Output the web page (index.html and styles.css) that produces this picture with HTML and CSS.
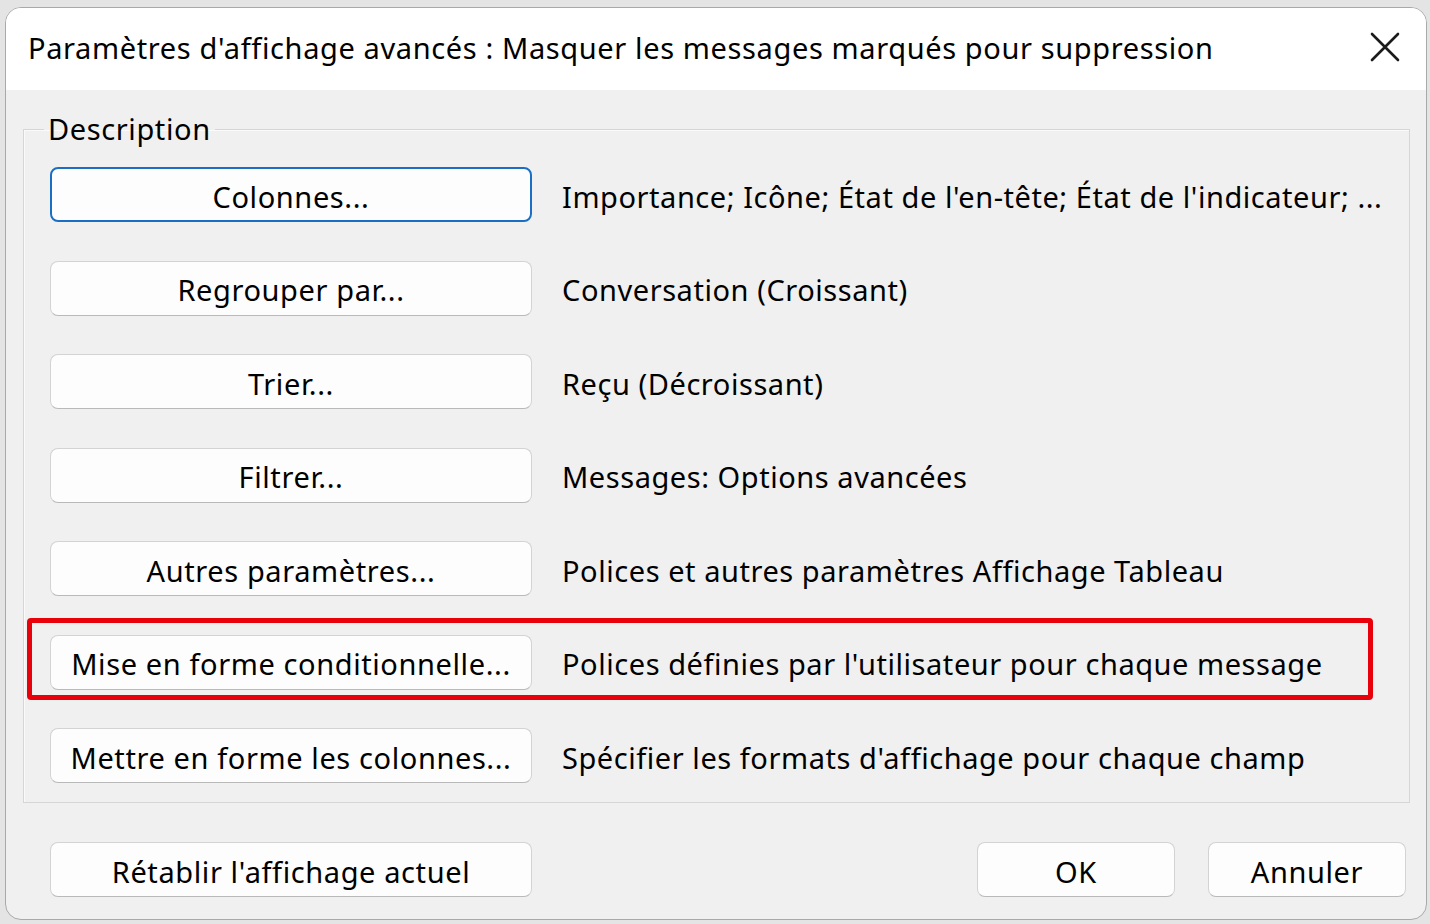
FILE: index.html
```html
<!DOCTYPE html>
<html lang="fr">
<head>
<meta charset="utf-8">
<title>Paramètres d'affichage avancés</title>
<link rel="stylesheet" href="styles.css">
</head>
<body>
<div class="dialog">
  <div class="titlebar">
    <div class="title">Paramètres d'affichage avancés : Masquer les messages marqués pour suppression</div>
    <div class="close" aria-label="Fermer">
      <svg width="30" height="30" viewBox="0 0 30 30"><path d="M2 2 L28 28 M28 2 L2 28" stroke="#1b1b1b" stroke-width="2.6" stroke-linecap="round" fill="none"/></svg>
    </div>
  </div>
  <div class="content">
    <fieldset class="group">
      <legend>Description</legend>
      <div class="row"><button class="btn focused">Colonnes...</button><span class="desc">Importance; Icône; État de l'en-tête; État de l'indicateur; ...</span></div>
      <div class="row"><button class="btn">Regrouper par...</button><span class="desc">Conversation (Croissant)</span></div>
      <div class="row"><button class="btn">Trier...</button><span class="desc">Reçu (Décroissant)</span></div>
      <div class="row"><button class="btn">Filtrer...</button><span class="desc">Messages: Options avancées</span></div>
      <div class="row"><button class="btn">Autres paramètres...</button><span class="desc">Polices et autres paramètres Affichage Tableau</span></div>
      <div class="row highlighted"><button class="btn">Mise en forme conditionnelle...</button><span class="desc">Polices définies par l'utilisateur pour chaque message</span><div class="redbox"></div></div>
      <div class="row"><button class="btn">Mettre en forme les colonnes...</button><span class="desc">Spécifier les formats d'affichage pour chaque champ</span></div>
    </fieldset>
    <div class="footer">
      <button class="btn">Rétablir l'affichage actuel</button>
      <div class="spacer"></div>
      <button class="btn small">OK</button>
      <button class="btn small">Annuler</button>
    </div>
  </div>
</div>
</body>
</html>
```

FILE: styles.css
```css
* { box-sizing: border-box; }
html, body { margin: 0; padding: 0; }
body {
  width: 1430px;
  height: 924px;
  background: #e4e4e4;
  font-family: "Noto Sans", "Open Sans", sans-serif;
  color: #000;
  overflow: hidden;
  padding: 7px 3px 0 5px;
}
.dialog {
  width: 1422px;
  height: 913px;
  border: 1px solid #a9a9a9;
  border-radius: 16px;
  overflow: hidden;
  background: #f0f0f0;
  display: flex;
  flex-direction: column;
}
.titlebar {
  height: 82px;
  background: #fff;
  display: flex;
  align-items: center;
  padding: 0 14px 4px 22px;
  flex: none;
}
.title {
  font-size: 29px;
  flex: 1;
  white-space: nowrap;
  letter-spacing: 0.62px;
}
.close {
  width: 30px;
  height: 30px;
  margin-right: 12px;
  display: flex;
}
.content {
  flex: 1;
  padding: 26px 16px 0 17px;
  display: flex;
  flex-direction: column;
}
.group {
  margin: 0;
  border: 1px solid #d6d6d6;
  box-shadow: inset 1px 1px 0 #fafafa;
  padding: 25px 0 17px 26px;
  height: 687px;
  display: flex;
  flex-direction: column;
  gap: 38.5px;
}
.group legend {
  font-size: 29px;
  letter-spacing: 0.6px;
  padding: 0 4px;
  margin-left: -6px;
  line-height: 26px;
}
.row {
  display: flex;
  align-items: center;
  gap: 30px;
  position: relative;
}
.btn {
  font-family: inherit;
  font-size: 29px;
  letter-spacing: 0.6px;
  color: #000;
  width: 482px;
  height: 55px;
  background: #fdfdfd;
  border: 1px solid #d3d3d3;
  border-bottom-color: #b9b9b9;
  border-radius: 8px;
  padding: 3px 0 0;
  flex: none;
  line-height: 1;
}
.btn.focused {
  border: 2px solid #1a6fc4;
  box-shadow: inset 0 0 0 1px #fff;
}
.desc {
  font-size: 29px;
  letter-spacing: 0.55px;
  white-space: nowrap;
  padding-top: 3px;
}
.redbox {
  position: absolute;
  left: -23px;
  top: -17px;
  width: 1346px;
  height: 82px;
  border: 5px solid #e8000b;
  border-radius: 4px;
  pointer-events: none;
}
.footer {
  display: flex;
  padding: 39px 4px 0 27px;
  gap: 33px;
}
.spacer { flex: 1; }
.btn.small { width: 198px; }
```
